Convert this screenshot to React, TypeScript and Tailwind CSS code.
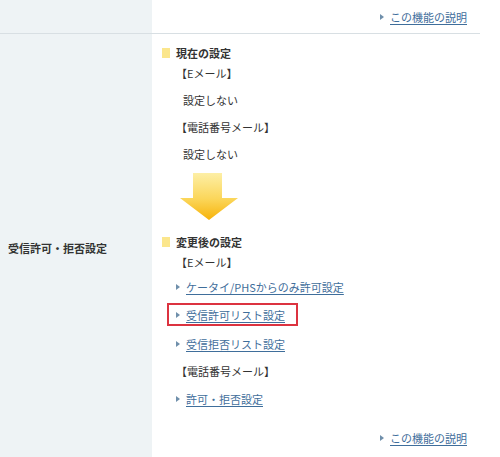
import React from 'react';

const font = { fontFamily: '"Noto Sans CJK JP", "Noto Sans", sans-serif' };

function Bullet() {
  return (
    <svg width="4" height="6" viewBox="0 0 4 6" className="shrink-0">
      <path d="M0 0 L4 3 L0 6 Z" fill="#6f8fab" />
    </svg>
  );
}

function TextLink({ children }: { children: React.ReactNode }) {
  return (
    <a href="#" className="flex items-center gap-[6px] h-[20px] text-[#3f6e9b] underline underline-offset-2 decoration-[#3f6e9b]">
      <Bullet />
      <span>{children}</span>
    </a>
  );
}

function Heading({ children }: { children: React.ReactNode }) {
  return (
    <div className="flex items-center gap-[6px] h-[20px] font-bold">
      <span className="w-[8px] h-[10px] bg-[#fbe68c] shrink-0" />
      <span>{children}</span>
    </div>
  );
}

function Arrow() {
  return (
    <svg width="58" height="47" viewBox="0 0 58 47" className="ml-[18px] mt-[9px] block shrink-0">
      <defs>
        <linearGradient id="arrowFill" x1="0" y1="0" x2="0" y2="1">
          <stop offset="0" stopColor="#fdefa6" />
          <stop offset="0.55" stopColor="#fbd65a" />
          <stop offset="1" stopColor="#f7b30a" />
        </linearGradient>
      </defs>
      <path d="M13 0 H42 V25 H58 L29 47 L0 25 H13 Z" fill="url(#arrowFill)" />
    </svg>
  );
}

export default function App() {
  return (
    <div className="w-[500px] h-[457px] overflow-hidden bg-white text-[11px] text-[#333] leading-[20px]" style={font}>
      <div className="w-[480px]">
        {/* top row */}
        <div className="flex h-[34px] border-b border-[#d8dfe3]">
          <div className="w-[152px] bg-[#eef3f5]" />
          <div className="flex-1 flex justify-end items-center pr-[13px]">
            <TextLink>この機能の説明</TextLink>
          </div>
        </div>

        {/* settings row */}
        <div className="flex h-[430px]">
          <div className="w-[152px] bg-[#eef3f5] flex items-center pl-[8px] pb-[2px] font-bold">
            受信許可・拒否設定
          </div>
          <div className="flex-1 pl-[10px] pt-[9px] flex flex-col">
            <Heading>現在の設定</Heading>
            <div className="pl-[14px] h-[20px]">【Eメール】</div>
            <div className="pl-[21px] h-[20px] mt-[7px]">設定しない</div>
            <div className="pl-[14px] h-[20px] mt-[7px]">【電話番号メール】</div>
            <div className="pl-[21px] h-[20px] mt-[7px]">設定しない</div>

            <Arrow />

            <div className="mt-[12px]">
              <Heading>変更後の設定</Heading>
            </div>
            <div className="pl-[14px] h-[20px]">【Eメール】</div>
            <div className="pl-[14px] mt-[5px] flex">
              <TextLink>ケータイ/PHSからのみ許可設定</TextLink>
            </div>
            <div className="ml-[5px] mt-[6px] w-fit h-[23px] flex items-center border-2 border-[#dc3340] pl-[7px] pr-[11px]">
              <TextLink>受信許可リスト設定</TextLink>
            </div>
            <div className="pl-[14px] mt-[8px] flex">
              <TextLink>受信拒否リスト設定</TextLink>
            </div>
            <div className="pl-[14px] h-[20px] mt-[7px]">【電話番号メール】</div>
            <div className="pl-[14px] mt-[8px] flex">
              <TextLink>許可・拒否設定</TextLink>
            </div>
            <div className="mt-[19px] flex justify-end pr-[13px]">
              <TextLink>この機能の説明</TextLink>
            </div>
          </div>
        </div>
      </div>
    </div>
  );
}
